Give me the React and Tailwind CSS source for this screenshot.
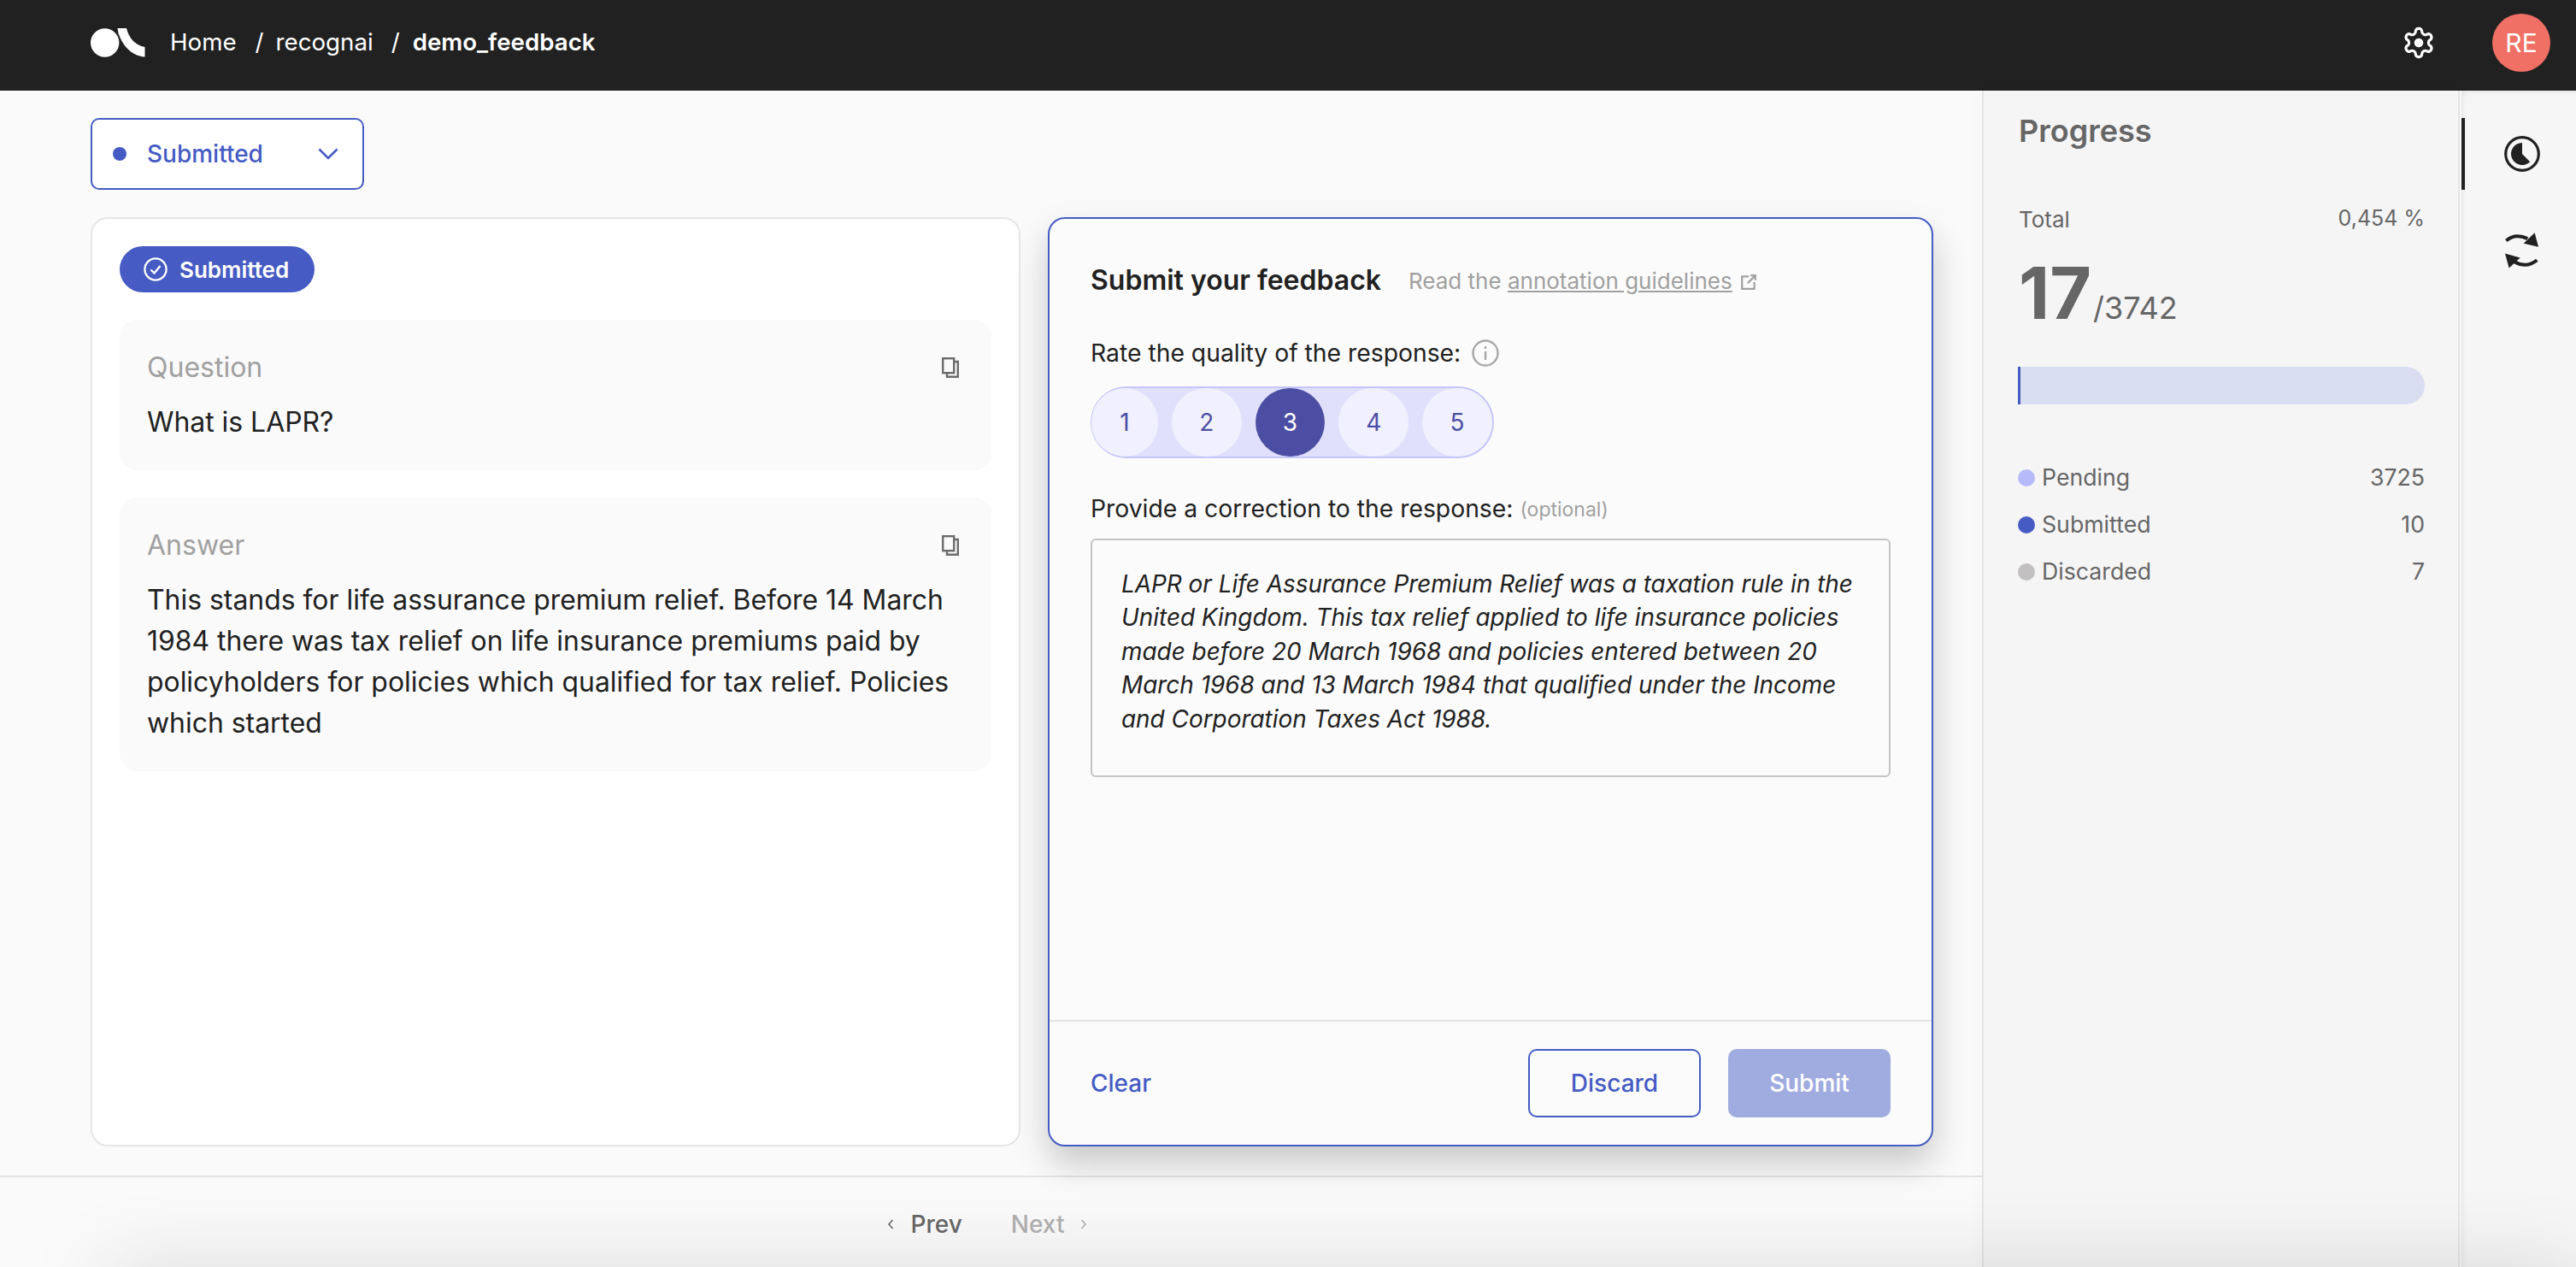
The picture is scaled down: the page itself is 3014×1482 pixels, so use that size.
import React from "react";

const answer =
  "This stands for life assurance premium relief. Before 14 March 1984 there was tax relief on life insurance premiums paid by policyholders for policies which qualified for tax relief. Policies which started";

const correction =
  "LAPR or Life Assurance Premium Relief was a taxation rule in the United Kingdom. This tax relief applied to life insurance policies made before 20 March 1968 and policies entered between 20 March 1968 and 13 March 1984 that qualified under the Income and Corporation Taxes Act 1988.";

function Logo() {
  return (
    <svg width="64" height="34" viewBox="106 33 64 34" fill="#ffffff">
      <circle cx="122.7" cy="50" r="16.7" />
      <path d="M137.5 33H148C150.5 44 158 53 169.5 55V66.5C153 65.5 143 52 138.5 39Z" />
    </svg>
  );
}

function Gear() {
  return (
    <svg width="40" height="40" viewBox="0 0 24 24" fill="none" stroke="#ffffff" strokeWidth="1.9">
      <path d="M12.22 2h-.44a2 2 0 0 0-2 2v.18a2 2 0 0 1-1 1.73l-.43.25a2 2 0 0 1-2 0l-.15-.08a2 2 0 0 0-2.73.73l-.22.38a2 2 0 0 0 .73 2.73l.15.1a2 2 0 0 1 1 1.72v.51a2 2 0 0 1-1 1.74l-.15.09a2 2 0 0 0-.73 2.73l.22.38a2 2 0 0 0 2.73.73l.15-.08a2 2 0 0 1 2 0l.43.25a2 2 0 0 1 1 1.73V20a2 2 0 0 0 2 2h.44a2 2 0 0 0 2-2v-.18a2 2 0 0 1 1-1.73l.43-.25a2 2 0 0 1 2 0l.15.08a2 2 0 0 0 2.73-.73l.22-.39a2 2 0 0 0-.73-2.73l-.15-.08a2 2 0 0 1-1-1.74v-.5a2 2 0 0 1 1-1.74l.15-.09a2 2 0 0 0 .73-2.73l-.22-.38a2 2 0 0 0-2.73-.73l-.15.08a2 2 0 0 1-2 0l-.43-.25a2 2 0 0 1-1-1.73V4a2 2 0 0 0-2-2z" />
      <circle cx="12" cy="12" r="3.2" fill="#ffffff" stroke="none" />
    </svg>
  );
}

function CopyIcon() {
  return (
    <svg width="20" height="24" viewBox="0 0 20 24" fill="none" stroke="#6b6b6b" strokeWidth="2.4">
      <rect x="1.2" y="1.2" width="13" height="17" />
      <path d="M14.5 5H18.8V22.8H6V18.5" />
    </svg>
  );
}

function ClockIcon() {
  return (
    <svg width="42" height="42" viewBox="0 0 42 42">
      <circle cx="21" cy="21" r="19.3" fill="none" stroke="#212121" strokeWidth="3.2" />
      <path d="M21 21V8A13 13 0 1 0 30.2 30.2Z" fill="#212121" />
    </svg>
  );
}

function RefreshIcon() {
  return (
    <svg width="45" height="47" viewBox="170 415 135 140">
      <path d="M183 452Q215 424 258 445" fill="none" stroke="#212121" strokeWidth="12" />
      <path d="M283 424L296 474L244 462Z" fill="#212121" />
      <path d="M291 520Q255 550 212 526" fill="none" stroke="#212121" strokeWidth="12" />
      <path d="M179 497L232 512L193 548Z" fill="#212121" />
    </svg>
  );
}

function Block({ label, children }) {
  return (
    <div className="rounded-[20px] bg-[#fafafa] p-[32px]">
      <div className="mb-[16px] flex h-[48px] items-center justify-between pr-[6px]">
        <span className="text-[32px] text-[#a0a0a0]">{label}</span>
        <CopyIcon />
      </div>
      <p className="text-[31.9px] leading-[48px] text-[#212121]">{children}</p>
    </div>
  );
}

function Stat({ color, label, value }) {
  return (
    <div className="flex h-[55px] items-center text-[26.7px] text-[#666666]">
      <span className={`-ml-[1px] mr-[8px] h-[20px] w-[20px] rounded-full ${color}`} />
      <span>{label}</span>
      <span className="ml-auto">{value}</span>
    </div>
  );
}

function Rating({ n, active, className }) {
  return (
    <div
      className={`flex h-[80px] items-center justify-center rounded-full text-[28px] ${className} ${
        active ? "bg-[#4c4ea3] text-white" : "bg-[#f0f0fe] text-[#4c4ea3]"
      }`}
    >
      {n}
    </div>
  );
}

export default function App() {
  return (
    <div className="relative flex h-screen w-full flex-col overflow-hidden bg-[#fafafa] font-['Inter',sans-serif] text-[#212121]">
      <header className="flex h-[106px] shrink-0 items-center bg-[#212121] pb-[6px] pl-[106px] pr-[30px] text-[27.7px] text-white">
        <Logo />
        <span className="ml-[29px]">Home</span>
        <span className="ml-[22px]">/</span>
        <span className="ml-[14px]">recognai</span>
        <span className="ml-[21px]">/</span>
        <span className="ml-[15px] font-semibold">demo_feedback</span>
        <span className="ml-auto mr-[66px] flex">
          <Gear />
        </span>
        <span className="flex h-[68px] w-[68px] items-center justify-center rounded-full bg-[#f07065] text-[30px]">
          RE
        </span>
      </header>

      <div className="flex min-h-0 flex-1">
        <main className="flex w-[2319px] shrink-0 flex-col">
          <div className="flex-1 pl-[106px] pt-[32px]">
            <div className="flex h-[84px] w-[320px] items-center rounded-[10px] border-2 border-[#455bc4] bg-white pl-[24px] text-[28px] font-medium text-[#455bc4]">
              <span className="h-[16px] w-[16px] rounded-full bg-[#455bc4]" />
              <span className="ml-[24px]">Submitted</span>
              <svg className="ml-auto mr-[28px]" width="24" height="14" viewBox="0 0 24 14" fill="none" stroke="#455bc4" strokeWidth="2.6">
                <path d="M1.5 1.5L12 12L22.5 1.5" />
              </svg>
            </div>

            <div className="mt-[32px] flex h-[1087px] gap-[32px]">
              <section className="w-[1088px] rounded-[20px] border-2 border-[#e6e6e6] bg-white p-[32px]">
                <div className="flex h-[54px] w-[228px] items-center rounded-full bg-[#465bc3] pl-[28px] text-[26px] font-semibold text-white">
                  <svg width="28" height="28" viewBox="0 0 28 28" fill="none" stroke="#ffffff" strokeWidth="2.3">
                    <circle cx="14" cy="14" r="12.6" />
                    <path d="M8.5 14.5L12.5 18.5L19.5 10" />
                  </svg>
                  <span className="ml-[14px]">Submitted</span>
                </div>
                <div className="mt-[32px] flex flex-col gap-[32px]">
                  <Block label="Question">What is LAPR?</Block>
                  <Block label="Answer">{answer}</Block>
                </div>
              </section>

              <section className="relative z-10 flex w-[1036px] flex-col rounded-[20px] border-2 border-[#455bc4] bg-[#fbfbfb] shadow-[0_20px_40px_rgba(0,0,0,0.2)]">
                <div className="flex-1 px-[48px] pt-[52px]">
                  <div className="flex h-[40px] items-center">
                    <h2 className="text-[32px] font-semibold">Submit your feedback</h2>
                    <span className="ml-[32px] text-[26px] text-[#a0a0a0]">
                      Read the <span className="underline">annotation guidelines</span>
                    </span>
                    <svg className="ml-[9px] mt-[4px]" width="20" height="20" viewBox="0 0 18 18" fill="none" stroke="#a0a0a0" strokeWidth="2">
                      <path d="M9 3H2V16H15V9M8 10L16 2M11 2H16V7" />
                    </svg>
                  </div>

                  <div className="mt-[47px] flex h-[36px] items-center text-[28.3px]">
                    <span>Rate the quality of the response:</span>
                    <svg className="ml-[13px]" width="32" height="32" viewBox="0 0 32 32" fill="none" stroke="#a8a8a8" strokeWidth="2.4">
                      <circle cx="16" cy="16" r="14.5" />
                      <path d="M16 14V24M16 8V11" />
                    </svg>
                  </div>

                  <div className="mt-[21px] flex h-[84px] w-[472px] items-center gap-[16px] rounded-full border-2 border-[#c5c5fb] bg-[#e0e0fc]">
                    <Rating n={1} className="-ml-[1px] w-[78px]" />
                    <Rating n={2} className="w-[82px]" />
                    <Rating n={3} active className="w-[82px]" />
                    <Rating n={4} className="w-[82px]" />
                    <Rating n={5} className="w-[82px]" />
                  </div>

                  <div className="mt-[41px] flex h-[36px] items-center text-[28.3px]">
                    <span>Provide a correction to the response:</span>
                    <span className="ml-[8px] mt-[3px] text-[23px] text-[#a0a0a0]">(optional)</span>
                  </div>

                  <div className="mt-[17px] h-[279px] w-[936px] rounded-[6px] border-2 border-[#c4c4c4] pl-[34px] pr-[30px] pt-[32px] text-[27.9px] italic leading-[39.4px]">
                    {correction}
                  </div>
                </div>

                <div className="flex h-[146px] items-center border-t-2 border-[#e2e2e2] px-[48px] text-[28px] font-medium">
                  <span className="text-[#455bc4]">Clear</span>
                  <button className="ml-auto h-[80px] w-[202px] rounded-[10px] border-2 border-[#455bc4] text-[#455bc4]">
                    Discard
                  </button>
                  <button className="ml-[32px] h-[80px] w-[190px] rounded-[10px] bg-[#a0acdf] text-white">
                    Submit
                  </button>
                </div>
              </section>
            </div>
          </div>

          <nav className="flex h-[107px] shrink-0 items-center justify-center border-t-2 border-[#e4e4e4] pr-[9px] pt-[4px] text-[28px] font-medium">
            <svg width="8" height="14" viewBox="0 0 8 14" fill="none" stroke="#666666" strokeWidth="1.6">
              <path d="M6.5 2L2 7L6.5 12" />
            </svg>
            <span className="ml-[20px] text-[#666666]">Prev</span>
            <span className="ml-[57px] text-[#b0b0b0]">Next</span>
            <svg className="ml-[19px]" width="8" height="14" viewBox="0 0 8 14" fill="none" stroke="#b0b0b0" strokeWidth="1.6">
              <path d="M1.5 2L6 7L1.5 12" />
            </svg>
          </nav>
        </main>

        <aside className="w-[559px] shrink-0 border-x-2 border-[#e4e4e4] bg-[#f5f5f5] pl-[41px] pr-[39px] pt-[25px] text-[#666666] shadow-[0_0_16px_rgba(0,0,0,0.03)]">
          <h3 className="text-[36px] font-semibold leading-[44px]">Progress</h3>
          <div className="mt-[63px] flex h-[36px] items-center justify-between text-[26px]">
            <span>Total</span>
            <span className="text-[25px]">0,454 %</span>
          </div>
          <div className="mt-[29px] flex h-[80px] items-baseline">
            <span className="text-[84px] font-bold leading-[80px]">17</span>
            <span className="ml-[2px] text-[36px]">/3742</span>
          </div>
          <div className="mt-[46px] -ml-[1px] flex h-[44px] w-[476px] overflow-hidden rounded-r-full bg-[#d9ddf2]">
            <div className="h-full w-[3px] bg-[#455bc4]" />
          </div>
          <div className="mt-[58px]">
            <Stat color="bg-[#b7bafa]" label="Pending" value="3725" />
            <Stat color="bg-[#465bc3]" label="Submitted" value="10" />
            <Stat color="bg-[#c2c0c0]" label="Discarded" value="7" />
          </div>
        </aside>

        <div className="ml-[2px] flex flex-1 flex-col bg-[#f6f6f6] pt-[32px] shadow-[inset_5px_0_6px_-3px_rgba(0,0,0,0.06),inset_0_6px_6px_-4px_rgba(0,0,0,0.06)]">
          <div className="flex h-[84px] items-center justify-center border-l-[4px] border-[#212121] pl-[4px]">
            <ClockIcon />
          </div>
          <div className="mt-[28px] flex h-[84px] items-center justify-center border-l-[4px] border-transparent pl-[2px]">
            <RefreshIcon />
          </div>
        </div>
      </div>

      <div className="pointer-events-none absolute left-[130px] right-0 top-full h-[40px] translate-y-[18px] shadow-[0_0_100px_rgba(0,0,0,0.25)]" />
    </div>
  );
}
